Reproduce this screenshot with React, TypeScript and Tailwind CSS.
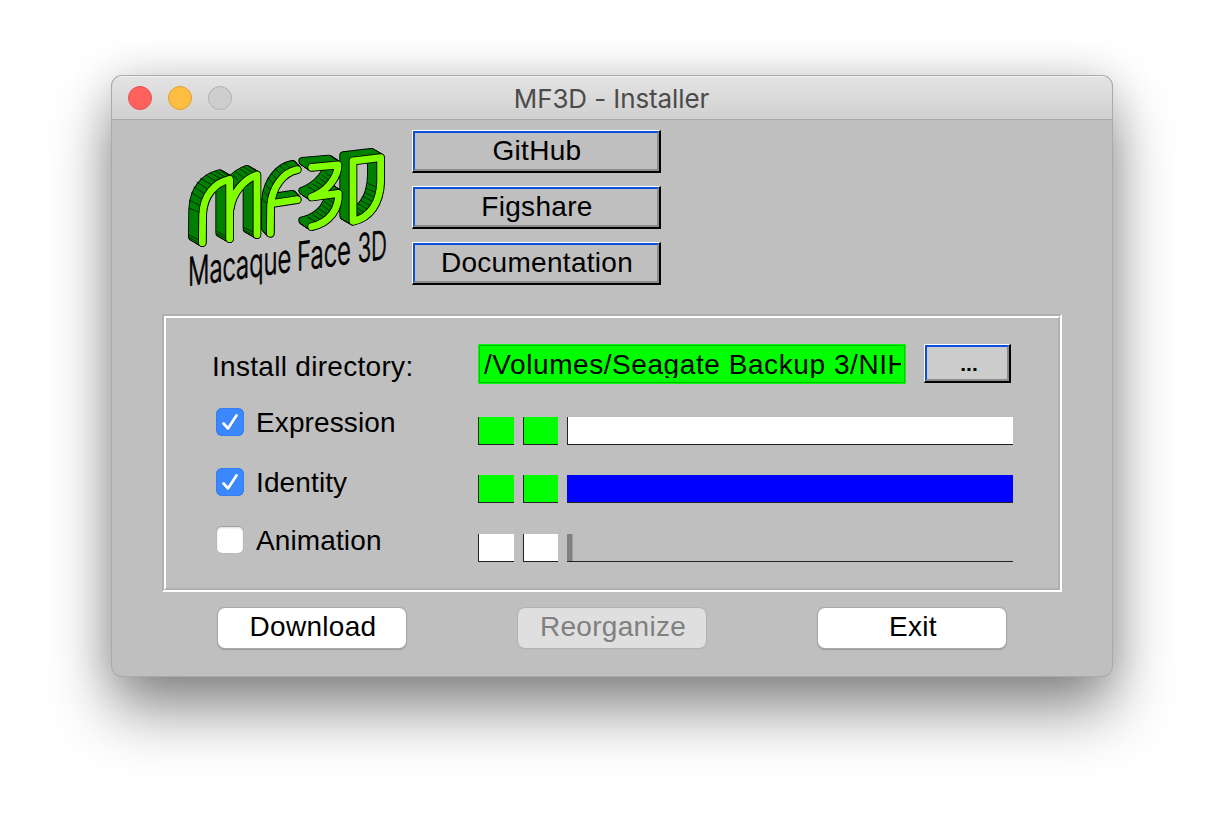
import React from "react";

type Stroke = { d: string; dx: number; dy: number };

const LETTERS: Stroke[] = [
  { d: "M67,308 L68,225 C70,165 105,128 149,118 L149,296 M151,205 C158,155 195,117 231,105 L231,284", dx: -31, dy: -18 },
  { d: "M271,280 L272,195 C277,140 310,97 352,89 M273,191 L352,179", dx: -16, dy: -17 },
  { d: "M395,82 L474,75 C474,112 440,155 395,171 L475,160 C478,205 450,248 395,260", dx: -28, dy: -19 },
  { d: "M519,63 L602,53 L602,125 C600,190 570,233 519,244 Z", dx: -29, dy: -17 },
];

const STEPS = Array.from({ length: 17 }, (_, i) => 1 - i / 16);

const RIDGES: [number, number, number, number][] = [
  [57, 217, 27, 204], [59, 196, 27, 180], [64, 176, 33, 158], [71, 160, 41, 140],
  [81, 146, 50, 126], [92, 133, 61, 115], [105, 122, 75, 104], [119, 114, 89, 97],
  [133, 109, 104, 93], [146, 107, 120, 91],
  [161, 135, 153, 124], [174, 120, 160, 105],
  [188, 110, 166, 95], [203, 102, 178, 86], [218, 97, 190, 81], [230, 94, 203, 78],
  [58, 309, 27, 293], [58, 301, 27, 285], [140, 297, 110, 281], [140, 289, 110, 274], [222, 286, 191, 270], [222, 278, 191, 262],
  [261, 191, 246, 176], [264, 169, 249, 152], [270, 148, 255, 131], [279, 130, 263, 114],
  [290, 116, 274, 100], [302, 103, 286, 86], [316, 92, 298, 76], [330, 84, 312, 67],
  [456, 113, 436, 97], [450, 122, 426, 106], [442, 131, 417, 114], [433, 140, 407, 124],
  [423, 148, 397, 132], [411, 156, 383, 139], [461, 190, 440, 174], [457, 202, 432, 184],
  [451, 213, 424, 195], [443, 223, 416, 206], [434, 232, 406, 215], [424, 240, 396, 223],
  [412, 247, 382, 231], [474, 64, 448, 46],
  [590, 142, 562, 130], [587, 157, 558, 145],
  [582, 171, 553, 157], [577, 184, 548, 169], [570, 196, 542, 181], [562, 207, 534, 191],
  [552, 217, 530, 203], [542, 224, 530, 215],
];

const JOINED = { strokeLinecap: "round" as const, strokeLinejoin: "round" as const, fill: "none" };

function Solid({ letter }: { letter: Stroke }) {
  const copies = (color: string, width: number) =>
    STEPS.map((t) => (
      <path key={t} d={letter.d} stroke={color} strokeWidth={width} transform={`translate(${letter.dx * t} ${letter.dy * t})`} {...JOINED} />
    ));
  return (
    <g>
      {copies("#000", 24)}
      {copies("#008000", 18.5)}
    </g>
  );
}

function Front({ d }: { d: string }) {
  return (
    <g>
      <path d={d} stroke="#000" strokeWidth={26} {...JOINED} />
      <path d={d} stroke="#80ff00" strokeWidth={20.5} {...JOINED} />
    </g>
  );
}

function Logo() {
  return (
    <svg className="h-[150px] w-[220px] shrink-0" viewBox="0 0 660 450">
      {LETTERS.map((l) => <Solid key={l.d} letter={l} />)}
      {RIDGES.map(([a, b, c, d]) => <line key={`${a}-${b}`} x1={a} y1={b} x2={c} y2={d} stroke="#000" strokeWidth={2} />)}
      {LETTERS.map((l) => <Front key={l.d} d={l.d} />)}
      <g transform="matrix(1 -0.138 0 1 0 441)" fontFamily="Inter" fontWeight="300" fontSize="118" stroke="#000" strokeWidth="2.4">
        <text x="24" y="0" textLength="310" lengthAdjust="spacingAndGlyphs">Macaque</text>
        <text x="351" y="0" textLength="162" lengthAdjust="spacingAndGlyphs">Face</text>
        <text x="533" y="0" textLength="88" lengthAdjust="spacingAndGlyphs">3D</text>
      </g>
    </svg>
  );
}

function LinkButton({ children }: { children: React.ReactNode }) {
  return (
    <button className="h-[43px] w-[249px] border-t border-r-2 border-b-2 border-l border-t-white border-r-black border-b-black border-l-white">
      <span className="flex h-full w-full items-center justify-center border-2 border-t-[#0a4fdc] border-r-[#8c8c8c] border-b-[#8c8c8c] border-l-[#0a4fdc] pb-px pl-[2px] leading-none tracking-[0.3px]">
        {children}
      </span>
    </button>
  );
}

function Check({ checked, label }: { checked?: boolean; label: string }) {
  return (
    <label className="flex h-7 w-[262px] items-center gap-3 leading-7">
      {checked ? (
        <span className="h-7 w-7 rounded-[6px] bg-[#3b87fd] shadow-[inset_0_0_0_1px_#347ef0]">
          <svg viewBox="0 0 28 28" className="h-7 w-7" fill="none" strokeLinecap="round" strokeLinejoin="round">
            <path d="M7.5 16.5 L12 21.5 L20.5 8.5" stroke="#2866c8" strokeOpacity="0.5" strokeWidth="2.8" />
            <path d="M7.5 15.5 L12 20.5 L20.5 7.5" stroke="#fff" strokeWidth="2.8" />
          </svg>
        </span>
      ) : (
        <span className="flex h-7 w-7 items-center justify-center">
          <span className="h-[26px] w-[26px] rounded-[5px] bg-white shadow-[0_-1px_1px_#a0a0a0,0_0_1px_#999,inset_0_1px_2px_#ddd]" />
        </span>
      )}
      <span className="pt-[2px] tracking-[0.12px]">{label}</span>
    </label>
  );
}

function Squares({ done }: { done?: boolean }) {
  const tone = done ? "bg-[#00ff00]" : "bg-white";
  return (
    <>
      <span className={`mr-[9px] h-7 w-9 border-b border-l border-[#222] ${tone}`} />
      <span className={`mr-[9px] h-7 w-[35px] border-b border-l border-[#222] ${tone}`} />
    </>
  );
}

function PushButton({ children, disabled }: { children: React.ReactNode; disabled?: boolean }) {
  const tone = disabled ? "bg-[#dfdfdf] text-[#808080] shadow-[0_0_0_1px_#b2b2b2,0_1px_1px_#aaa]" : "bg-white shadow-[0_0_0_1px_#a9a9a9,0_1px_1px_1px_#999]";
  return (
    <button className={`flex h-10 w-[188px] items-center justify-center rounded-[7px] pb-[3px] pl-[2px] leading-none tracking-[0.3px] ${tone}`}>
      {children}
    </button>
  );
}

export default function App() {
  return (
    <div className="h-[824px] w-[1224px] overflow-hidden bg-white pt-[76px] pl-28 font-['Liberation_Sans',Arial,sans-serif] text-[28px] text-black">
      <main className="h-[600px] w-[1000px] overflow-hidden rounded-[10px] bg-[#bfbfbf] shadow-[0_0_0_1px_#aaa,0_34px_62px_rgba(0,0,0,0.45),0_0_44px_rgba(0,0,0,0.15)]">
        <header className="flex h-11 items-center border-b border-[#a8a8a8] bg-linear-to-b from-[#e4e4e4] to-[#d0d0d0] px-4 shadow-[inset_0_1px_0_#f2f2f2]">
          <div className="flex w-[120px] gap-4">
            <span className="h-6 w-6 rounded-full border border-[#e2504b] bg-[#ff625c]" />
            <span className="h-6 w-6 rounded-full border border-[#dfa033] bg-[#fdbd41]" />
            <span className="h-6 w-6 rounded-full border border-[#b0b0b0] bg-[#cecece]" />
          </div>
          <h1 className="flex-1 pt-[3px] pr-[121px] text-center font-['Inter',sans-serif] text-[26px] leading-none tracking-[-0.1px] text-[#4b4b4b]">MF3D - Installer</h1>
        </header>

        <section className="flex h-[194px] pl-[68px]">
          <div className="w-[232px] pt-5"><Logo /></div>
          <nav className="flex flex-col gap-[13px] pt-[10px]">
            <LinkButton>GitHub</LinkButton>
            <LinkButton>Figshare</LinkButton>
            <LinkButton>Documentation</LinkButton>
          </nav>
        </section>

        <section className="ml-[50px] h-[278px] w-[900px] border-2 border-t-[#b0b0b0] border-r-white border-b-white border-l-[#b0b0b0]">
          <div className="h-full border-2 border-t-white border-r-[#b0b0b0] border-b-[#b0b0b0] border-l-white">
            <div className="flex h-[66px] items-start pt-[26px] pl-[46px]">
              <span className="w-[266px] pt-[9px] leading-7 tracking-[0.3px]">Install directory:</span>
              <div className="mr-[18px] h-10 w-[428px] border border-[#00ff00] bg-[#00ff00]">
                <div className="h-full border border-[#00b800] pt-1 pr-[3px] pl-1">
                  <div className="h-[28px] overflow-hidden leading-[30px] tracking-[0.57px] whitespace-nowrap">/Volumes/Seagate Backup 3/NIH</div>
                </div>
              </div>
              <button className="h-[39px] w-[87px] border-t border-r-2 border-b-2 border-l border-t-white border-r-black border-b-black border-l-white">
                <span className="flex h-full items-center justify-center border-2 border-t-[#0a4fdc] border-r-[#8c8c8c] border-b-[#8c8c8c] border-l-[#0a4fdc] bg-[#cccccc] pt-px pl-1 text-[21px] leading-none font-bold">...</span>
              </button>
            </div>
            <div className="flex h-[60px] pt-6 pl-[50px]">
              <Check checked label="Expression" />
              <div className="flex pt-[9px]">
                <Squares done />
                <span className="h-7 w-[446px] border-b border-l border-[#222] bg-white" />
              </div>
            </div>
            <div className="flex h-[59px] pt-6 pl-[50px]">
              <Check checked label="Identity" />
              <div className="flex pt-[7px]">
                <Squares done />
                <span className="h-7 w-[446px] border-b border-[#222] bg-[#0000ff]" />
              </div>
            </div>
            <div className="flex h-[60px] pt-[23px] pl-[50px]">
              <Check label="Animation" />
              <div className="flex pt-2">
                <Squares />
                <span className="flex h-7 w-[446px] border-b border-[#222]">
                  <span className="w-[6px] border-r border-[#a0a0a0] bg-[#808080]" />
                </span>
              </div>
            </div>
          </div>
        </section>

        <footer className="flex gap-28 pt-4 pl-[106px]">
          <PushButton>Download</PushButton>
          <PushButton disabled>Reorganize</PushButton>
          <PushButton>Exit</PushButton>
        </footer>
      </main>
    </div>
  );
}
